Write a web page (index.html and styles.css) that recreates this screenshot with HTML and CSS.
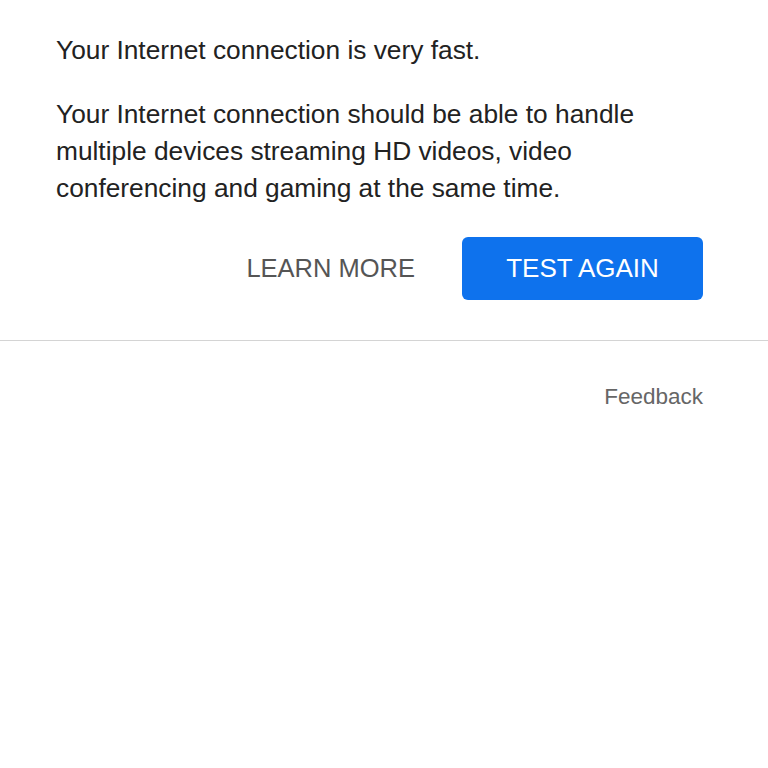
FILE: index.html
```html
<!DOCTYPE html>
<html lang="en">
<head>
  <meta charset="UTF-8">
  <title>Speed test result</title>
  <link rel="stylesheet" href="styles.css">
</head>
<body>

  <div class="resultado">
    <p class="resumen">Your Internet connection is very fast.</p>
    <p class="detalle">Your Internet connection should be able to handle multiple devices streaming HD videos, video conferencing and gaming at the same time.</p>

    <div class="acciones">
      <button class="btn-texto">LEARN MORE</button>
      <button class="btn-primario">TEST AGAIN</button>
    </div>
  </div>

  <div class="pie">
    <a href="#" class="feedback">Feedback</a>
  </div>

</body>
</html>
```

FILE: styles.css
```css
* {
  box-sizing: border-box;
}

body {
  margin: 0;
  font-family: 'Liberation Sans', Arial, sans-serif;
  background: #ffffff;
  color: #222;
}

.resultado {
  padding: 32px 65px 40px 56px;
  border-bottom: 1px solid #d4d4d4;
}

.resultado p {
  margin: 0;
  font-size: 26.3px;
  line-height: 37px;
  max-width: 620px;
}

.resumen {
  margin-bottom: 27px !important;
}

.acciones {
  display: flex;
  justify-content: flex-end;
  align-items: center;
  gap: 47px;
  margin-top: 30px;
}

button {
  font-family: inherit;
  font-size: 26px;
  border: none;
  cursor: pointer;
}

.btn-texto {
  background: none;
  color: #555;
  padding: 0;
  font-size: 25.5px;
}

.btn-primario {
  background: #0e72ed;
  color: #ffffff;
  height: 63px;
  width: 241px;
  border-radius: 6px;
}

.pie {
  display: flex;
  justify-content: flex-end;
  padding: 44px 65px 0 0;
}

.feedback {
  color: #666;
  font-size: 22.5px;
  line-height: 24px;
  text-decoration: none;
}
```
